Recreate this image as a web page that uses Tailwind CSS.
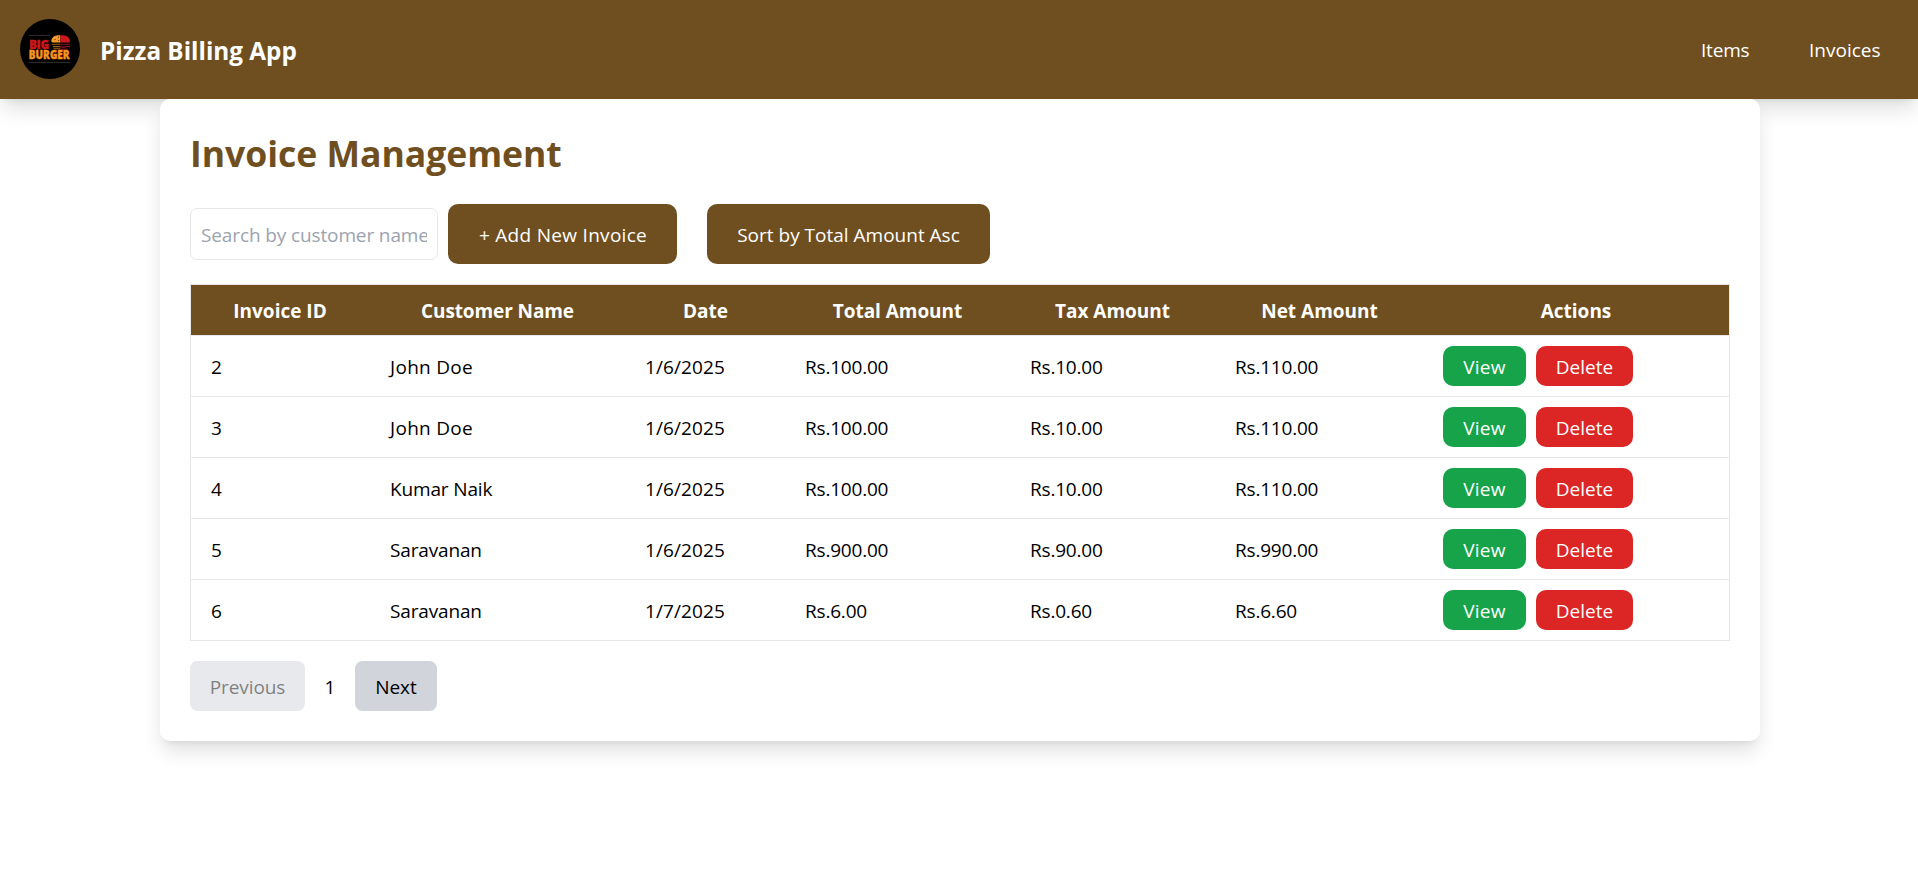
<!DOCTYPE html>
<html lang="en">
<head>
<meta charset="utf-8">
<title>Pizza Billing App</title>
<script src="https://cdn.jsdelivr.net/npm/@tailwindcss/browser@4"></script>
</head>
<body class="bg-white text-black font-['Open_Sans',sans-serif] text-[19px] leading-[30px] min-h-screen overflow-hidden">
<header class="h-[99px] bg-[#6f4f20] text-white flex items-center justify-between pl-5 pr-[36px] shadow-[0_12.5px_20px_-2.5px_rgba(0,0,0,0.12),0_5px_7.5px_-5px_rgba(0,0,0,0.1)]">
  <div class="flex items-center gap-5">
    <svg class="size-[60px] -mt-px" viewBox="0 0 60 60">
      <circle cx="30" cy="30" r="30" fill="#000"/>
      <path d="M8.7 16.4H30M8.7 43.4H50.5" stroke="#3a3a3a" stroke-width=".8"/>
      <text x="9.3" y="29.9" font-family="Open Sans, sans-serif" font-weight="800" font-size="12" textLength="19.8" lengthAdjust="spacingAndGlyphs" fill="#cc181c" stroke="#cc181c" stroke-width=".5">BIG</text>
      <text x="8.8" y="40.2" font-family="Open Sans, sans-serif" font-weight="800" font-size="11.8" textLength="40.8" lengthAdjust="spacingAndGlyphs" fill="#f7941d" stroke="#f7941d" stroke-width=".4">BURGER</text>
      <path d="M40.3 16.3H38C34 16.5 31.3 19 31.3 22.3Q31.3 23.4 32.5 23.4H40.3Z" fill="#f49a2a"/>
      <path d="M40.3 16.3H43C47 16.5 50 19 50 22.3Q50 23.4 48.8 23.4H40.3Z" fill="#cc181c"/>
      <path d="M34.7 20.6h1M38 18.3h1M38.2 21.5h1" stroke="#5a2c08" stroke-width="1"/>
      <path d="M32 25.2H40.3M33 27.6H40.3M33.5 29.8H40.3" stroke="#a35f18" stroke-width="1.1"/>
      <path d="M40.3 25.2H50M40.3 27.6l3 .8 3-.8H50M40.3 30.3H48" fill="none" stroke="#8c1518" stroke-width="1.1"/>
    </svg>
    <h1 class="text-[24.3px] leading-[35px] font-bold pt-[2px]">Pizza Billing App</h1>
  </div>
  <nav class="flex items-center gap-[60px]">
    <a class="w-[48px] tracking-[-0.2px] pt-px">Items</a>
    <a class="w-[73px] pt-px">Invoices</a>
  </nav>
</header>
<main class="relative w-[1600px] h-[642px] ml-[160px] bg-white rounded-[10px] px-[30px] pt-[30px] shadow-[0_12.5px_20px_-2.5px_rgba(0,0,0,0.12),0_5px_7.5px_-5px_rgba(0,0,0,0.1)]">
  <h2 class="h-[45px] mb-[30px] pt-[2px] text-[35.6px] leading-[45px] font-bold tracking-[-0.05px] text-[#6f4f20]">Invoice Management</h2>
  <div class="flex items-center h-[60px] mb-5">
    <div class="w-[248px] h-[52px] border border-gray-200 rounded-[7px] px-[10px] pt-[2px] flex items-center mr-[10px]">
      <input class="w-full h-[30px] outline-none placeholder:text-[#9ca3af] tracking-[-0.12px]" placeholder="Search by customer name">
    </div>
    <button class="w-[229px] h-[60px] pt-[2px] pl-[1px] rounded-[10px] bg-[#6f4f20] text-white tracking-[0.3px] mr-[30px]">+ Add New Invoice</button>
    <button class="w-[283px] h-[60px] pt-[2px] rounded-[10px] bg-[#6f4f20] text-white">Sort by Total Amount Asc</button>
  </div>
  <div class="w-[1540px] border border-[#e5e7eb]">
    <table class="w-[1538px] table-fixed border-separate border-spacing-0 text-left">
      <colgroup><col class="w-[178px]"><col class="w-[256px]"><col class="w-[159px]"><col class="w-[225px]"><col class="w-[205px]"><col class="w-[209px]"><col class="w-[306px]"></colgroup>
      <thead>
        <tr class="h-[51px] bg-[#6f4f20] text-white text-center [&>th]:border-b [&>th]:border-[#e5e7eb] [&>th]:py-0 [&>th]:pr-0 [&>th]:pt-[2px] [&>th]:font-bold">
          <th>Invoice ID</th><th class="pl-px tracking-[-0.1px]">Customer Name</th><th class="pl-[2px]">Date</th><th class="pl-[2px] tracking-[-0.05px]">Total Amount</th><th class="pl-[2px]">Tax Amount</th><th class="pl-[2px]">Net Amount</th><th>Actions</th>
        </tr>
      </thead>
      <tbody id="rows"></tbody>
    </table>
  </div>
  <div class="flex items-center mt-5 h-[50px]">
    <button class="w-[115px] h-[50px] pt-[2px] rounded-[7.5px] bg-[#d1d5db] opacity-50 tracking-[-0.1px]">Previous</button>
    <span class="w-[50px] text-center pt-[2px]">1</span>
    <button class="w-[82px] h-[50px] pt-[2px] rounded-[7.5px] bg-[#d1d5db]">Next</button>
  </div>
</main>
<template id="row">
  <tr class="h-[61px] last:h-[60px] [&>td]:border-b last:[&>td]:border-b-0 [&>td]:border-[#e5e7eb] [&>td]:py-0 [&>td]:pl-[21px] [&>td]:pr-0">
    <td><div class="pt-[2px] -ml-px"></div></td>
    <td><div class="pt-[2px] tracking-[-0.15px]"></div></td>
    <td><div class="pt-[2px] -ml-px tracking-[0.1px]"></div></td>
    <td><div class="pt-[2px] tracking-[-0.2px]"></div></td>
    <td><div class="pt-[2px] tracking-[-0.2px]"></div></td>
    <td><div class="pt-[2px] tracking-[-0.2px]"></div></td>
    <td><div class="flex gap-[10px] -ml-px">
      <button class="w-[83px] h-[40px] pt-[2px] rounded-[10px] bg-[#16a34a] text-white tracking-[0.3px]">View</button>
      <button class="w-[97px] h-[40px] pt-[2px] rounded-[10px] bg-[#dc2626] text-white">Delete</button>
    </div></td>
  </tr>
</template>
<script>
const invoices = [
  ['2','John Doe','1/6/2025','Rs.100.00','Rs.10.00','Rs.110.00'],
  ['3','John Doe','1/6/2025','Rs.100.00','Rs.10.00','Rs.110.00'],
  ['4','Kumar Naik','1/6/2025','Rs.100.00','Rs.10.00','Rs.110.00'],
  ['5','Saravanan','1/6/2025','Rs.900.00','Rs.90.00','Rs.990.00'],
  ['6','Saravanan','1/7/2025','Rs.6.00','Rs.0.60','Rs.6.60'],
];
const tpl = document.getElementById('row'), body = document.getElementById('rows');
for (const inv of invoices) {
  const node = tpl.content.cloneNode(true);
  const cells = node.querySelectorAll('td > div');
  inv.forEach((v, i) => {
    cells[i].textContent = v;
    if (v === 'John Doe') cells[i].classList.replace('tracking-[-0.15px]', 'tracking-[0.3px]');
  });
  body.appendChild(node);
}
</script>
</body>
</html>
